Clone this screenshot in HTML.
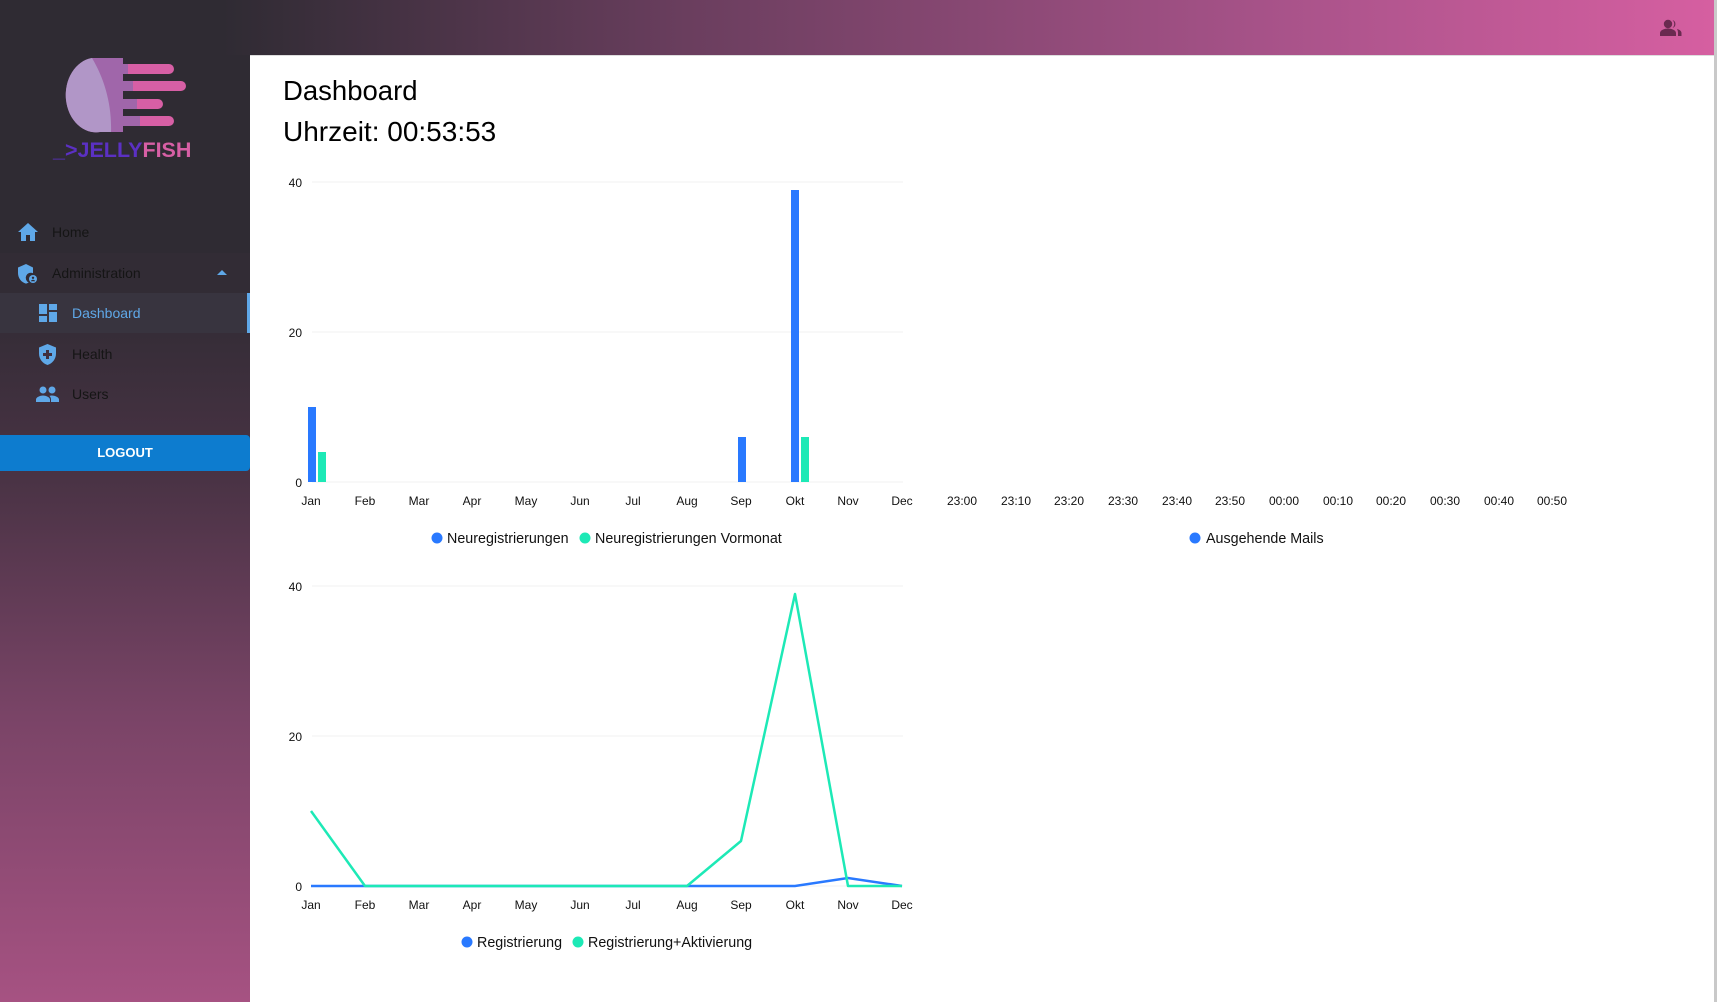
<!DOCTYPE html>
<html><head><meta charset="utf-8"><style>
*{margin:0;padding:0;box-sizing:border-box}
body{width:1717px;height:1002px;overflow:hidden;font-family:"Liberation Sans",Arial,sans-serif;background:#fff;position:relative}
.hdr{position:absolute;left:0;top:0;width:1717px;height:55px;background:linear-gradient(90deg,#2f2b33 0%,#2f2b33 13%,#6a3e5e 40%,#a9538a 75%,#d65fa1 100%)}
.side{position:absolute;left:0;top:55px;width:250px;height:947px;background:linear-gradient(180deg,#2f2b33 0%,#2f2b33 24%,#4a3345 45%,#7a4467 70%,#a65282 100%)}
.main{position:absolute;left:250px;top:55px;width:1464px;height:947px;background:#fff;border-top:1px solid #ddd}
.sb{position:absolute;left:1714px;top:0;width:3px;height:1002px;background:#c9c9c9}
.nav{position:absolute;left:0;width:250px;height:40px;font-size:14px;color:#151515;display:flex;align-items:center}
.nav svg{position:absolute}
.nav span{position:absolute}
.logout{position:absolute;left:0;top:435px;width:250px;height:36px;background:#0d7ccf;border-radius:0 4px 4px 0;color:#fff;font-weight:bold;font-size:13px;text-align:center;line-height:36px}
h1{position:absolute;left:283px;top:75px;font-size:27.5px;font-weight:normal;color:#000}
h2{position:absolute;left:283px;top:116px;font-size:28px;font-weight:normal;color:#000}
</style></head><body>
<div class="hdr">
<svg style="position:absolute;left:1659px;top:19px" width="24" height="18" viewBox="0 0 24 18"><circle cx="9" cy="5" r="4.2" fill="#6a2a50"/><path d="M1 17v-3c0-3 5-4.5 8-4.5s8 1.5 8 4.5v3z" fill="#6a2a50"/><path d="M13.5 1a4.2 4.2 0 0 1 0 8 5.5 5.5 0 0 0 0-8zM18 10c2.5.7 4.5 2 4.5 4v3h-3.5v-3c0-1.6-.4-3-1-4z" fill="#6a2a50"/></svg>
</div>
<div class="side"></div>
<!-- logo -->
<svg style="position:absolute;left:0;top:40px" width="230" height="130" viewBox="0 40 230 130">
<g stroke-linecap="round" stroke-width="10">
<line x1="120" y1="69" x2="169" y2="69" stroke="#d75fa5"/><line x1="120" y1="86" x2="181" y2="86" stroke="#d75fa5"/><line x1="120" y1="104" x2="158" y2="104" stroke="#d75fa5"/><line x1="120" y1="121" x2="169" y2="121" stroke="#d75fa5"/>
</g>
<g stroke-width="10">
<line x1="118" y1="69" x2="128" y2="69" stroke="#a066aa"/><line x1="118" y1="86" x2="133" y2="86" stroke="#a066aa"/><line x1="118" y1="104" x2="137" y2="104" stroke="#a066aa"/><line x1="118" y1="121" x2="140" y2="121" stroke="#a066aa"/>
</g>
<path d="M92 58 L123 58 L123 132 L100 132 A30 37 0 0 1 92 58Z" fill="#a066aa"/>
<path d="M92 58 C104 78 112 104 111 132 L100 132 A30 37 0 0 1 92 58Z" fill="#b196c7"/>
<text x="53" y="157" font-family="Liberation Sans,sans-serif" font-weight="bold" font-size="21.5"><tspan fill="#5b30c3">_&gt;JELLY</tspan><tspan fill="#d75fa5">FISH</tspan></text>
</svg>
<div class="nav" style="top:212px"><svg style="left:18px;top:11px" width="20" height="18" viewBox="0 0 20 18"><path d="M8 18v-6h4v6h5V9h3L10 0 0 9h3v9z" fill="#5fa8e8"/></svg><span style="left:52px;top:12px">Home</span></div>
<div class="nav" style="top:253px;background:#322c35"><svg style="left:18px;top:11px" width="20" height="20" viewBox="0 0 20 20"><path d="M8 0L0 3.5v5.5c0 5 3.4 9.5 8 10.6 1-.2 1.9-.6 2.7-1.1A5 5 0 0 1 15 9.2V3.5z" fill="#5fa8e8"/><circle cx="15" cy="15" r="4" fill="#5fa8e8"/><circle cx="15" cy="13.8" r="1.2" fill="#322c35"/><path d="M12.8 17.2c.5-1 1.3-1.4 2.2-1.4s1.7.4 2.2 1.4z" fill="#322c35"/></svg><span style="left:52px;top:12px">Administration</span><svg style="left:217px;top:17px" width="10" height="6" viewBox="0 0 10 6"><path d="M0 5L5 0l5 5z" fill="#5fa8e8"/></svg></div>
<div class="nav" style="top:293px;height:40px;background:#38343f;border-right:3px solid #5fa8e8"><svg style="left:39px;top:11px" width="18" height="18" viewBox="0 0 18 18"><path d="M0 0h8v10H0zM10 0h8v6h-8zM10 8h8v10h-8zM0 12h8v6H0z" fill="#5fa8e8"/></svg><span style="left:72px;top:12px;color:#5fa8e8">Dashboard</span></div>
<div class="nav" style="top:334px"><svg style="left:39px;top:10px" width="17" height="21" viewBox="0 0 17 21"><path d="M8.5 0L0 3.5v6c0 5.5 3.6 10 8.5 11.5C13.4 19.5 17 15 17 9.5v-6z" fill="#5fa8e8"/><path d="M7 6h3v3h3v3h-3v3H7v-3H4V9h3z" fill="#402f3f"/></svg><span style="left:72px;top:12px">Health</span></div>
<div class="nav" style="top:374px"><svg style="left:36px;top:12px" width="23" height="16" viewBox="0 0 23 16"><circle cx="7" cy="4" r="3.5" fill="#5fa8e8"/><circle cx="16" cy="4" r="3.5" fill="#5fa8e8"/><path d="M0 16v-2.5C0 11 4.5 9.5 7 9.5s7 1.5 7 4V16zM15 16v-2.5c0-1.5-.6-2.7-1.6-3.6.9-.3 1.9-.4 2.6-.4 2.5 0 7 1.5 7 4V16z" fill="#5fa8e8"/></svg><span style="left:72px;top:12px">Users</span></div>
<div class="logout">LOGOUT</div>
<div class="main"></div>
<div class="sb"></div>
<h1>Dashboard</h1>
<h2>Uhrzeit: 00:53:53</h2>
<svg style="position:absolute;left:0;top:0" width="1717" height="1002" viewBox="0 0 1717 1002" font-family="Liberation Sans,sans-serif">
<g stroke="#f0f0f0" stroke-width="1">
<line x1="312" y1="182" x2="903" y2="182"/><line x1="312" y1="332" x2="903" y2="332"/><line x1="312" y1="482" x2="903" y2="482"/>
<line x1="312" y1="586" x2="903" y2="586"/><line x1="312" y1="736" x2="903" y2="736"/><line x1="312" y1="886" x2="903" y2="886"/>
</g>
<g font-size="12" fill="#111" text-anchor="end">
<text x="302" y="187">40</text><text x="302" y="337">20</text><text x="302" y="487">0</text>
<text x="302" y="591">40</text><text x="302" y="741">20</text><text x="302" y="891">0</text>
</g>
<g font-size="12" fill="#111" text-anchor="middle">
<text x="311" y="505">Jan</text><text x="365" y="505">Feb</text><text x="419" y="505">Mar</text><text x="472" y="505">Apr</text><text x="526" y="505">May</text><text x="580" y="505">Jun</text><text x="633" y="505">Jul</text><text x="687" y="505">Aug</text><text x="741" y="505">Sep</text><text x="795" y="505">Okt</text><text x="848" y="505">Nov</text><text x="902" y="505">Dec</text>
<text x="962" y="505">23:00</text><text x="1016" y="505">23:10</text><text x="1069" y="505">23:20</text><text x="1123" y="505">23:30</text><text x="1177" y="505">23:40</text><text x="1230" y="505">23:50</text><text x="1284" y="505">00:00</text><text x="1338" y="505">00:10</text><text x="1391" y="505">00:20</text><text x="1445" y="505">00:30</text><text x="1499" y="505">00:40</text><text x="1552" y="505">00:50</text>
<text x="311" y="909">Jan</text><text x="365" y="909">Feb</text><text x="419" y="909">Mar</text><text x="472" y="909">Apr</text><text x="526" y="909">May</text><text x="580" y="909">Jun</text><text x="633" y="909">Jul</text><text x="687" y="909">Aug</text><text x="741" y="909">Sep</text><text x="795" y="909">Okt</text><text x="848" y="909">Nov</text><text x="902" y="909">Dec</text>
</g>
<g fill="#2979ff"><rect x="308" y="407" width="8" height="75"/><rect x="738" y="437" width="8" height="45"/><rect x="791" y="190" width="8" height="292"/></g>
<g fill="#1de9b6"><rect x="318" y="452" width="8" height="30"/><rect x="801" y="437" width="8" height="45"/></g>
<polyline fill="none" stroke="#2979ff" stroke-width="2.5" points="311,886 365,886 419,886 472,886 526,886 580,886 633,886 687,886 741,886 795,886 848,878 902,886"/>
<polyline fill="none" stroke="#1de9b6" stroke-width="2.5" stroke-linejoin="round" points="311,811 365,886 419,886 472,886 526,886 580,886 633,886 687,886 741,841 795,594 848,886 902,886"/>
<g font-size="14.3" fill="#111">
<circle cx="437" cy="538" r="5.5" fill="#2979ff"/><text x="447" y="543">Neuregistrierungen</text>
<circle cx="585" cy="538" r="5.5" fill="#1de9b6"/><text x="595" y="543">Neuregistrierungen Vormonat</text>
<circle cx="1195" cy="538" r="5.5" fill="#2979ff"/><text x="1206" y="543">Ausgehende Mails</text>
<circle cx="467" cy="942" r="5.5" fill="#2979ff"/><text x="477" y="947">Registrierung</text>
<circle cx="578" cy="942" r="5.5" fill="#1de9b6"/><text x="588" y="947">Registrierung+Aktivierung</text>
</g>
</svg>
</body></html>
